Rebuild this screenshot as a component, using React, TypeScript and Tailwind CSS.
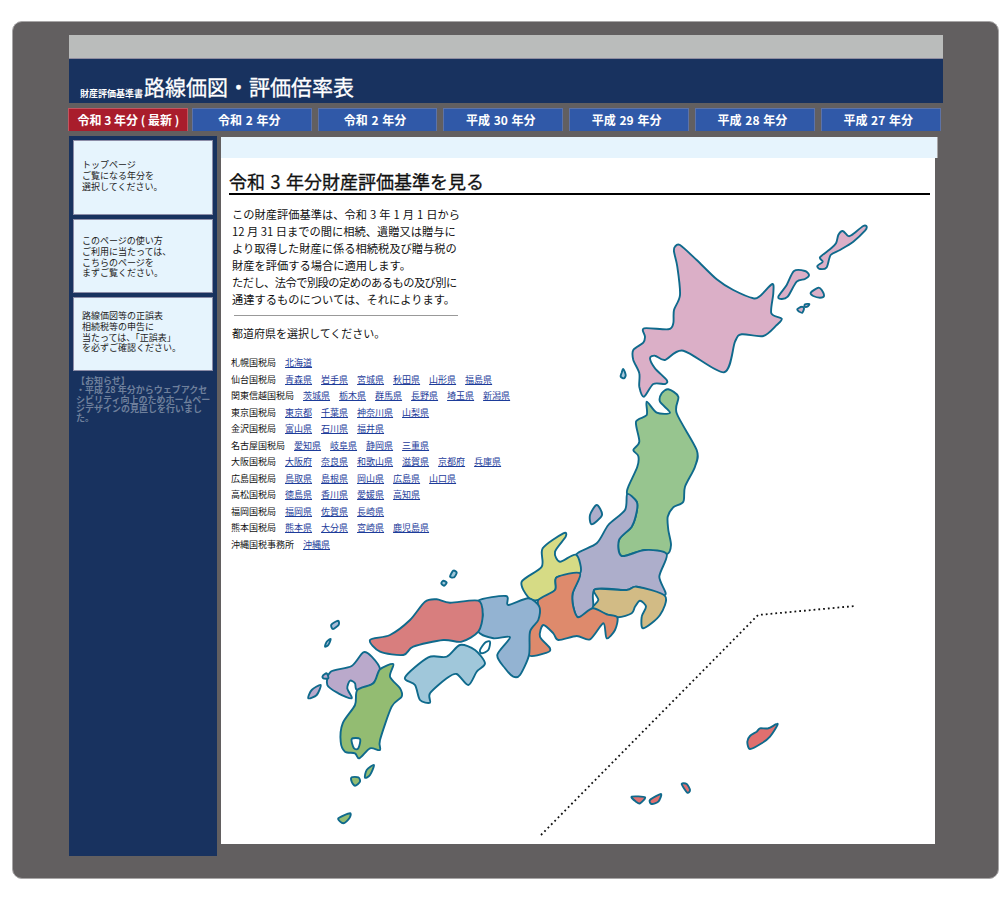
import React from "react";

type Shape = { o: [number, number]; p: string; f: string };

const smooth = (o: [number, number], s: string) => {
  const n = s.trim().split(/\s+/).map((t) => {
    const [x, y] = t.split(",").map(Number);
    return [o[0] + x / 3, o[1] + y / 3];
  });
  const l = n.length;
  let d = `M${n[0][0].toFixed(1)} ${n[0][1].toFixed(1)}`;
  for (let i = 0; i < l; i++) {
    const a = n[(i - 1 + l) % l], b = n[i], c = n[(i + 1) % l], e = n[(i + 2) % l];
    const k = 1 / 7;
    d += `C${(b[0] + (c[0] - a[0]) * k).toFixed(1)} ${(b[1] + (c[1] - a[1]) * k).toFixed(1)} ${(c[0] - (e[0] - b[0]) * k).toFixed(1)} ${(c[1] - (e[1] - b[1]) * k).toFixed(1)} ${c[0].toFixed(1)} ${c[1].toFixed(1)}`;
  }
  return d + "Z";
};

const A: [number, number] = [600, 210];
const B: [number, number] = [500, 380];
const C: [number, number] = [350, 560];
const D: [number, number] = [300, 640];
const E: [number, number] = [530, 590];

const shapes: Shape[] = [
  { o: A, f: "#dbafc7", p: "225,110 240,105 290,150 350,208 400,240 460,265 480,258 517,222 520,250 514,310 545,326 530,345 490,378 425,373 405,395 372,487 250,422 195,450 165,437 150,445 165,475 200,510 195,522 160,522 132,560 118,530 118,490 100,450 100,420 130,398 135,380 132,355 205,358 220,340 222,300 240,255 232,170 222,125" },
  { o: A, f: "#dbafc7", p: "800,50 790,48 755,75 745,78 728,63 715,75 708,100 690,118 660,142 668,155 652,168 660,177 680,172 692,135 720,120 760,95 795,62" },
  { o: A, f: "#dbafc7", p: "582,183 615,183 627,195 615,207 590,215 563,260 545,267 535,260 560,225" },
  { o: A, f: "#dbafc7", p: "632,248 655,233 665,240 672,258 660,263 640,258" },
  { o: A, f: "#dbafc7", p: "592,298 605,290 612,295 607,308 598,305" },
  { o: A, f: "#dbafc7", p: "615,283 628,282 622,290 614,290" },
  { o: A, f: "#a9c8dc", p: "70,477 77,495 72,505 62,500 65,488" },
  { o: B, f: "#97c58f", p: "505,28 535,50 530,100 590,210 585,260 555,320 550,365 520,382 503,410 505,450 513,495 500,522 435,510 365,528 357,480 395,440 410,395 410,365 382,342 385,320 412,260 415,228 400,210 418,185 408,125 440,105 440,65 470,98 510,98 480,65 485,40" },
  { o: B, f: "#adaecb", p: "290,375 306,405 275,433 270,405" },
  { o: B, f: "#adaecb", p: "382,342 410,365 410,395 395,440 357,480 365,528 435,510 500,522 478,590 495,645 410,620 380,630 285,628 278,685 235,712 220,680 218,640 240,580 228,524 290,490 325,435 375,390" },
  { o: B, f: "#d2bb85", p: "285,628 380,630 410,620 495,648 480,705 430,745 425,710 438,680 420,662 405,680 395,700 355,712 320,703 278,685 295,660" },
  { o: B, f: "#d6db85", p: "190,460 197,470 165,515 180,545 228,524 240,580 170,592 165,630 115,660 85,652 65,605 125,560 128,505" },
  { o: B, f: "#de8a6c", p: "240,580 218,640 220,680 235,712 278,685 320,703 352,712 345,750 320,775 310,730 270,778 230,768 175,780 160,760 130,735 120,770 150,805 140,818 85,825 90,750 118,700 115,660 165,630 170,592" },
  { o: C, f: "#93b3d2", p: "385,122 468,108 475,135 535,115 568,140 565,180 540,215 537,285 510,345 490,350 465,325 442,285 480,232 430,235 385,215 398,165" },
  { o: C, f: "#d87e7e", p: "385,122 398,165 385,215 335,245 280,240 190,260 160,285 90,275 60,240 120,225 180,180 225,125 260,118 300,128" },
  { o: C, f: "#a0c7da", p: "165,352 235,292 290,290 330,255 375,270 405,310 380,335 355,375 320,342 290,355 240,400 240,428 210,420 195,375" },
  { o: C, f: "#ffffff", p: "405,248 420,245 415,270 395,280 390,270" },
  { o: C, f: "#a0c7da", p: "310,32 320,38 312,52 300,50" },
  { o: C, f: "#a0c7da", p: "280,62 290,68 282,77 274,70" },
  { o: D, f: "#baa9cb", p: "190,37 215,50 240,88 220,130 172,150 165,130 150,122 142,145 155,175 115,160 82,135 92,95 155,78" },
  { o: D, f: "#93bc72", p: "280,72 270,110 300,145 305,170 275,200 240,300 240,330 210,325 178,355 165,340 135,335 122,305 128,250 165,195 172,150 220,130 240,88" },
  { o: D, f: "#ffffff", p: "155,297 180,297 175,325 162,325" },
  { o: D, f: "#baa9cb", p: "62,135 50,165 25,175 35,150" },
  { o: D, f: "#baa9cb", p: "80,100 85,115 70,115 68,108" },
  { o: D, f: "#a9bcd8", p: "92,-3 85,15 75,20 80,5" },
  { o: [298, 604], f: "#a9bcd8", p: "120,50 122,62 105,75 100,62" },
  { o: D, f: "#93bc72", p: "155,412 175,412 180,425 165,437 155,425" },
  { o: D, f: "#93bc72", p: "222,375 210,405 195,413 200,390" },
  { o: D, f: "#93bc72", p: "150,520 148,535 130,550 115,535" },
  { o: E, f: "#e06f6f", p: "743,402 720,440 695,460 660,477 652,455 660,438 680,425 690,415 715,415" },
  { o: E, f: "#e06f6f", p: "305,620 345,622 330,640 318,635" },
  { o: E, f: "#e06f6f", p: "393,612 385,635 365,642 360,630" },
  { o: E, f: "#e06f6f", p: "455,582 470,582 480,600 472,608" },
];

const JapanMap = () => (
  <svg className="absolute left-0 top-0 pointer-events-none" width={714} height={686} viewBox="221 158 714 686">
    {shapes.map((s, i) => (
      <path key={i} d={smooth(s.o, s.p)} fill={s.f} stroke="#0f6a8c" strokeWidth={1.9} strokeLinejoin="round" />
    ))}
    <path d="M541 835L758 615L855 606" fill="none" stroke="#111" strokeWidth={1.8} strokeDasharray="1.8 3" />
  </svg>
);

const tabs = [
  { t: "令和 3 年分 ( 最新 )", red: true },
  { t: "令和 2 年分" },
  { t: "令和 2 年分" },
  { t: "平成 30 年分" },
  { t: "平成 29 年分" },
  { t: "平成 28 年分" },
  { t: "平成 27 年分" },
];

const rows: [string, string[]][] = [
  ["札幌国税局", ["北海道"]],
  ["仙台国税局", ["青森県", "岩手県", "宮城県", "秋田県", "山形県", "福島県"]],
  ["関東信越国税局", ["茨城県", "栃木県", "群馬県", "長野県", "埼玉県", "新潟県"]],
  ["東京国税局", ["東京都", "千葉県", "神奈川県", "山梨県"]],
  ["金沢国税局", ["富山県", "石川県", "福井県"]],
  ["名古屋国税局", ["愛知県", "岐阜県", "静岡県", "三重県"]],
  ["大阪国税局", ["大阪府", "奈良県", "和歌山県", "滋賀県", "京都府", "兵庫県"]],
  ["広島国税局", ["鳥取県", "島根県", "岡山県", "広島県", "山口県"]],
  ["高松国税局", ["徳島県", "香川県", "愛媛県", "高知県"]],
  ["福岡国税局", ["福岡県", "佐賀県", "長崎県"]],
  ["熊本国税局", ["熊本県", "大分県", "宮崎県", "鹿児島県"]],
  ["沖縄国税事務所", ["沖縄県"]],
];

const boxes = [
  { c: "h-[75px] pt-[19px]", l: ["トップページ", "ご覧になる年分を", "選択してください。"] },
  { c: "h-[74px] pt-[16px]", l: ["このページの使い方", "ご利用に当たっては、", "こちらのページを", "まずご覧ください。"] },
  { c: "h-[74px] pt-[13px]", l: ["路線価図等の正誤表", "相続税等の申告に", "当たっては、「正誤表」", "を必ずご確認ください。"] },
];

export default function App() {
  return (
    <div className="w-[1001px] h-[921px] bg-white pt-[21px] pl-[12px] font-['Noto_Sans_CJK_JP','Noto_Sans',sans-serif] overflow-hidden">
      <div className="w-[987px] h-[858px] bg-[#625f60] rounded-[10px] border border-[#a8a6a7] pt-[13px] pl-[56px]">
        <div className="w-[874px] h-[24px] bg-[#babcbb] border-b border-[#8f8da0]" />
        <div className="w-[874px] h-[44px] bg-[#18325f] flex items-end pl-[11px] pb-[2px] text-white">
          <span className="text-[9px] leading-[15px] font-bold">財産評価基準書</span>
          <span className="text-[21px] leading-[30px] ml-[1px] [-webkit-text-stroke:0.3px_white]">路線価図・評価倍率表</span>
        </div>
        <div className="flex mt-[5px] -ml-[1px] w-[876px]">
          {tabs.map((t, i) => (
            <div
              key={i}
              className={`w-[119.8px] h-[23px] shrink-0 border border-b-0 flex items-center justify-center text-white text-[12px] font-bold whitespace-pre ${
                t.red
                  ? "bg-[#a91d2c] border-[#c25560] mr-[4px] pl-[1px]"
                  : "bg-[#3059a8] border-[#5d73a8] mr-[6px] pr-[5px] [word-spacing:1px]"
              }`}
            >
              {t.t}
            </div>
          ))}
        </div>
        <div className="flex mt-[5px] items-start">
          <div className="w-[148px] h-[720px] bg-[#18325f] p-[4px] flex flex-col gap-[4px] shrink-0">
            {boxes.map((b, i) => (
              <div
                key={i}
                className={`${b.c} bg-[#e6f4fd] border border-[#8c8da8] pl-[8px] text-[9px] leading-[10.8px] text-[#222]`}
              >
                {b.l.map((l) => (
                  <div key={l}>{l}</div>
                ))}
              </div>
            ))}
            <div className="text-[9px] leading-[9.3px] font-bold text-[#6f809c] pl-[3px] mt-[1px] whitespace-pre">
              <div>【お知らせ】</div>
              <div>・平成 28 年分からウェブアクセ</div>
              <div>シビリティ向上のためホームペー</div>
              <div>ジデザインの見直しを行いまし</div>
              <div>た。</div>
            </div>
          </div>
          <div className="ml-[4px] mt-[1px] w-[717px]">
            <div className="h-[21px] bg-[#e6f4fd] border-r border-[#a8a6a7]" />
            <div className="relative w-[714px] h-[686px] bg-white">
              <JapanMap />
              <div className="relative pl-[8px] pr-[5px] pt-[11px]">
                <h2 className="text-[18px] leading-[24px] text-[#111] border-b-2 border-black h-[26px] whitespace-pre [word-spacing:1.5px] [-webkit-text-stroke:0.3px_#111]">令和 3 年分財産評価基準を見る</h2>
                <div className="pl-[3px] mt-[11px] text-[11.25px] leading-[17px] text-[#111] whitespace-pre">
                  <div className="[word-spacing:0.5px]">この財産評価基準は、令和 3 年 1 月 1 日から</div>
                  <div>12 月 31 日までの間に相続、遺贈又は贈与に</div>
                  <div>より取得した財産に係る相続税及び贈与税の</div>
                  <div>財産を評価する場合に適用します。</div>
                  <div className="tracking-[-0.55px]">ただし、法令で別段の定めのあるもの及び別に</div>
                  <div>通達するものについては、それによります。</div>
                </div>
                <div className="ml-[5px] w-[224px] h-px bg-[#999] mt-[7px]" />
                <div className="pl-[3px] mt-[8px] text-[11px] leading-[18px] text-[#111]">都道府県を選択してください。</div>
                <div className="mt-[13px] pl-[2px] text-[9px]">
                  {rows.map(([r, ls]) => (
                    <div key={r} className="h-[16.55px] leading-[16.55px] flex gap-[9px] text-[#111]">
                      <span>{r}</span>
                      {ls.map((l) => (
                        <a key={l} className="text-[#1d3c9a] underline">{l}</a>
                      ))}
                    </div>
                  ))}
                </div>
              </div>
            </div>
          </div>
        </div>
      </div>
    </div>
  );
}
